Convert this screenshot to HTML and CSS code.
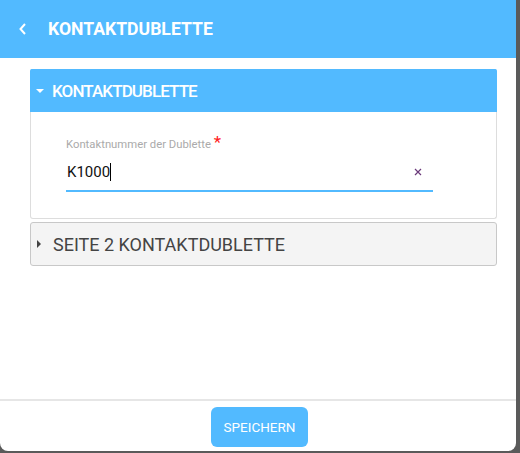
FILE: index.html
```html
<!DOCTYPE html>
<html lang="de">
<head>
    <meta charset="UTF-8">
    <title>Kontaktdublette</title>
    <link rel="stylesheet" href="styles.css">
</head>
<body>
    <div class="dialog">
        <div class="topbar">
            <svg class="back" width="10" height="12" viewBox="0 0 10 12"><path d="M7 1 L2.5 6 L7 11" fill="none" stroke="#fff" stroke-width="2"/></svg>
            <span class="topbar-title">KONTAKTDUBLETTE</span>
        </div>

        <div class="content">
            <div class="panel open">
                <div class="panel-head">
                    <span class="caret-down"></span>
                    <span>KONTAKTDUBLETTE</span>
                </div>
                <div class="panel-body">
                    <label class="field-label">Kontaktnummer der Dublette <span class="req">*</span></label>
                    <div class="field">
                        <span class="field-value">K1000</span><span class="cursor"></span>
                        <svg class="clear" width="8" height="8" viewBox="0 0 8 8"><path d="M1 1 L7 7 M7 1 L1 7" stroke="#6b3a7a" stroke-width="1.2"/></svg>
                    </div>
                </div>
            </div>

            <div class="panel closed">
                <div class="panel-head">
                    <span class="caret-right"></span>
                    <span>SEITE 2 KONTAKTDUBLETTE</span>
                </div>
            </div>
        </div>

        <div class="footer">
            <button class="save">SPEICHERN</button>
        </div>
    </div>
</body>
</html>
```

FILE: styles.css
```css
body {
    margin: 0;
    height: 453px;
    overflow: hidden;
    background-color: #5a5a5a;
    font-family: Roboto, "Liberation Sans", sans-serif;
}

.dialog {
    width: 516px;
    height: 451px;
    background-color: #ffffff;
    border-radius: 0 0 8px 8px;
    display: flex;
    flex-direction: column;
    overflow: hidden;
}

.topbar {
    height: 58px;
    background-color: #52baff;
    display: flex;
    align-items: center;
    flex-shrink: 0;
}

.back {
    margin-left: 18px;
    margin-right: 20px;
}

.topbar-title {
    color: #ffffff;
    font-weight: bold;
    font-size: 17.6px;
}

.content {
    flex: 1;
    padding: 11px 19px 0 30px;
}

.panel {
    border: 1px solid #dddddd;
    border-radius: 3px;
    margin-bottom: 3px;
}

.panel-head {
    height: 42px;
    display: flex;
    align-items: center;
    padding-left: 5px;
}

.open {
    border-color: #52baff #dddddd #dddddd #dddddd;
}

.open .panel-head {
    background-color: #52baff;
    color: #ffffff;
    margin: -1px -1px 0 -1px;
    height: 43px;
    border-radius: 2px 2px 0 0;
    font-size: 17px;
    font-weight: 500;
    letter-spacing: -0.9px;
}

.closed {
    background-color: #f4f4f4;
    border-color: #c8c8c8;
}

.closed .panel-head {
    color: #444444;
    font-size: 18px;
    font-weight: 400;
}

.caret-down {
    width: 0;
    height: 0;
    border-left: 4px solid transparent;
    border-right: 4px solid transparent;
    border-top: 4px solid #ffffff;
    margin-right: 8px;
    margin-left: 1px;
}

.caret-right {
    width: 0;
    height: 0;
    border-top: 4px solid transparent;
    border-bottom: 4px solid transparent;
    border-left: 4px solid #444444;
    margin-right: 12px;
    margin-left: 1px;
}

.panel-body {
    padding: 26px 63px 26px 35px;
}

.field-label {
    display: block;
    font-size: 11.3px;
    color: #aaaaaa;
    height: 15px;
}

.req {
    color: #ff2020;
    font-size: 17px;
    vertical-align: top;
    position: relative;
    top: -6px;
}

.field {
    display: flex;
    align-items: center;
    height: 37px;
    border-bottom: 2px solid #52baff;
    padding-left: 1px;
}

.field-value {
    font-size: 15px;
    color: #111111;
}

.cursor {
    width: 1px;
    height: 18px;
    background-color: #000000;
}

.clear {
    margin-left: auto;
    margin-right: 11px;
}

.footer {
    height: 52px;
    flex-shrink: 0;
    border-top: 2px solid #e6e6e6;
    display: flex;
    justify-content: center;
    padding-top: 6px;
    box-sizing: border-box;
}

.save {
    width: 97px;
    height: 40px;
    background-color: #52baff;
    color: #ffffff;
    border: none;
    border-radius: 6px;
    font-family: Roboto, "Liberation Sans", sans-serif;
    font-size: 13.5px;
    margin-left: 3px;
}
```
